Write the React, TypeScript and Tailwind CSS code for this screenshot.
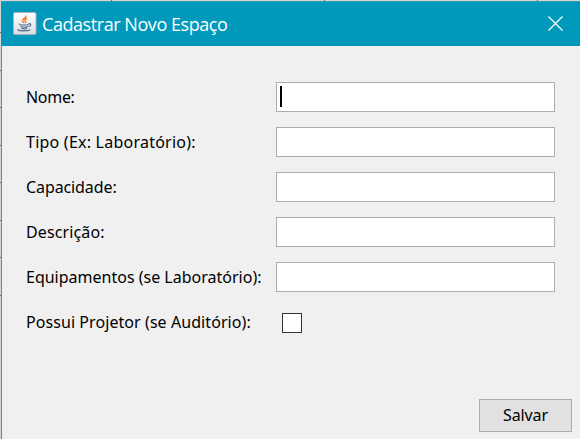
const fields = [
  { label: "Nome:", spacing: "tracking-[-0.3px]", active: true },
  { label: "Tipo (Ex: Laboratório):", spacing: "tracking-[0.23px]" },
  { label: "Capacidade:", spacing: "tracking-[-0.1px]" },
  { label: "Descrição:", spacing: "tracking-[0.12px]" },
  { label: "Equipamentos (se Laboratório):", spacing: "tracking-[0px]" },
];

// Grid lines of the table behind the dialog
const columnTicks = [111, 324, 537];
const rowTicks = [32, 70, 107, 145, 182, 220, 257, 295];

function JavaIcon() {
  return (
    <svg width="24" height="24" viewBox="0 0 24 24" className="shrink-0">
      <defs>
        <linearGradient id="tile" x1="0" y1="0" x2="0" y2="1">
          <stop offset="0" stopColor="#fff" />
          <stop offset="1" stopColor="#d9dde2" />
        </linearGradient>
      </defs>
      <rect x="0.5" y="0.5" width="22.5" height="22" rx="1.5" fill="url(#tile)" stroke="#a9b4bb" />
      <path d="M13 3.5c.8 2.5-4.400 3.400-3.400 5.700.4.9 1 1.100 1.300 1.800M14 6.300c-2 .9-2.700 1.800-1.600 2.900.6.7.3 1.200-.2 1.800" fill="none" stroke="#ef8130" strokeWidth="1.500" />
      <path d="M7.200 11.900c-1.400.7.3 1.100 3.400 1.100 2.600 0 4.300-.2 5-.6M7.500 14.500c1.800.7 5.600.7 7.200.1M8.200 16.300c1.600.7 4.300.6 5.700 0M15.300 11.900c3.500-.8 3 2.200.2 2.900M5.600 17.400c-1.800.8.5 1.400 5 1.400 4.200 0 7-.6 6.300-1.400" fill="none" stroke="#4f6e8a" strokeWidth="1.200" />
    </svg>
  );
}

export default function App() {
  return (
    <div className="relative h-[439px] w-[580px] overflow-hidden bg-[#d5d5d5] pl-px pt-px font-['Noto_Sans',sans-serif] text-black">
      {columnTicks.map((x) => (
        <i key={x} className="absolute top-0 h-px w-px bg-[#666]" style={{ left: x }} />
      ))}
      {rowTicks.map((y) => (
        <i key={y} className="absolute left-0 h-px w-px bg-[#666]" style={{ top: y }} />
      ))}
      <div className="flex h-full flex-col border-l border-[#2c9eb6] bg-[#f0f0f0]">
        <header className="-ml-px flex h-[45px] shrink-0 items-center border-t border-[#2c9eb6] bg-[#0099bc] pl-3 pr-[17px] text-white">
          <JavaIcon />
          <h1 className="ml-[5px] -mt-px whitespace-nowrap font-['Open_Sans',sans-serif] text-[18px] leading-6 tracking-[-0.44px]">
            Cadastrar Novo Espaço
          </h1>
          <svg width="15" height="15" viewBox="0 0 15 15" className="-mt-px ml-auto">
            <path d="M.5.5l14 14M14.5.5l-14 14" stroke="white" strokeWidth="1.200" />
          </svg>
        </header>
        <form className="flex grow flex-col pt-9 text-[16px]">
          <div className="flex flex-col gap-[15px] pl-6">
            {fields.map((f) => (
              <label key={f.label} className="flex h-[30px] items-center">
                <span className={`w-[250px] shrink-0 whitespace-nowrap ${f.spacing}`}>{f.label}</span>
                <span className="flex h-[30px] w-[279px] border border-[#abadb3] bg-white pl-[3px] pt-[3px]">
                  {f.active && <span className="h-[21px] w-[2px] bg-black" />}
                </span>
              </label>
            ))}
            <label className="flex h-[30px] items-center">
              <span className="w-[256px] shrink-0 whitespace-nowrap tracking-[0.07px]">Possui Projetor (se Auditório):</span>
              <span className="mt-[2px] size-5 border border-[#333] bg-white" />
            </label>
          </div>
          <button type="button" className="mb-[7px] ml-auto mr-2 mt-auto h-[33px] w-[93px] border border-[#adadad] bg-[#e1e1e1] pb-[2px] tracking-[-0.1px]">
            Salvar
          </button>
        </form>
      </div>
    </div>
  );
}
